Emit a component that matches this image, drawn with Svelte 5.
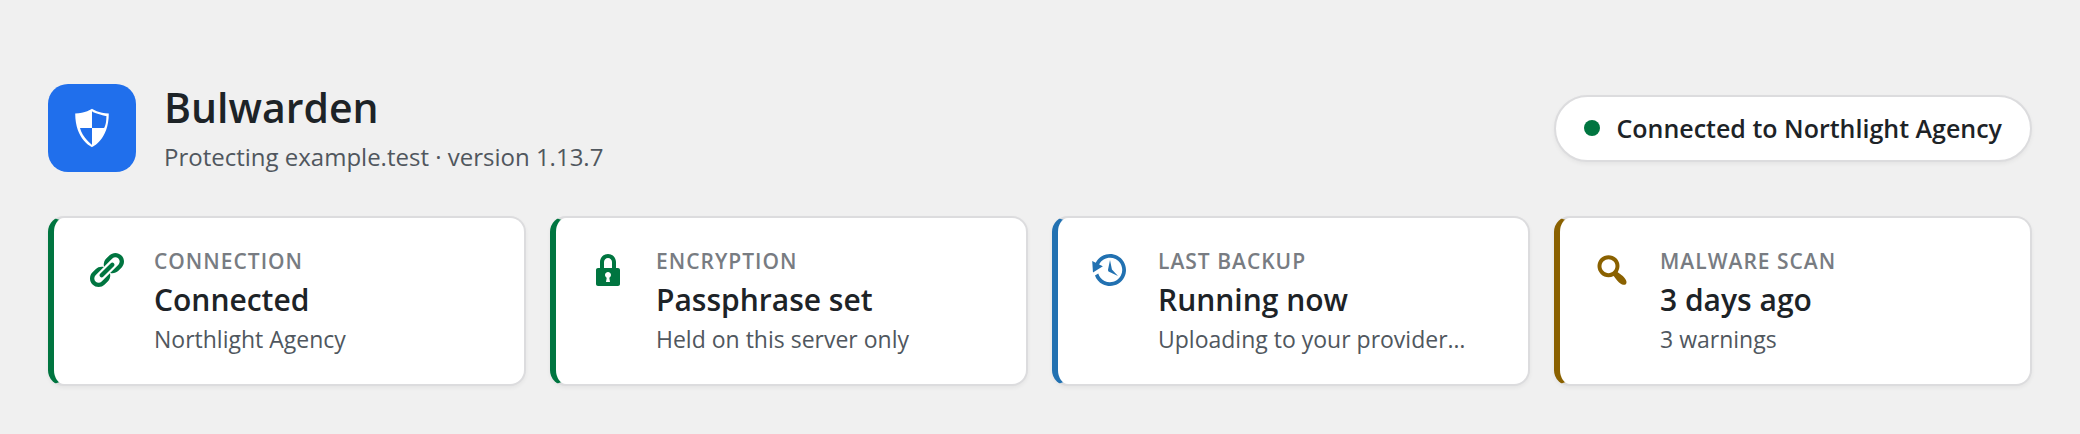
<script>
  const icons = {
    shield:
      'M10 2s3 2 7 2c0 11-7 14-7 14S3 15 3 4c4 0 7-2 7-2zm0 8h5s1-1 1-5c0 0-5-1-6-2v7H5c1 4 5 7 5 7v-7z',
    link: 'M17.74 2.76c1.68 1.69 1.68 4.41 0 6.1l-1.53 1.52c-1.12 1.12-2.7 1.47-4.14 1.09l2.62-2.61.76-.77.76-.76c.84-.84.84-2.2 0-3.04-.84-.85-2.2-.85-3.04 0l-.77.76-3.38 3.38c-.37-1.44-.02-3.02 1.1-4.14l1.52-1.53c1.69-1.68 4.42-1.68 6.1 0zM8.59 13.43l5.34-5.34c.42-.42.42-1.1 0-1.52-.44-.43-1.13-.39-1.53 0l-5.33 5.34c-.42.42-.42 1.1 0 1.52.44.43 1.13.39 1.52 0zm-.76 2.29l4.14-4.15c.38 1.44.03 3.02-1.09 4.14l-1.52 1.53c-1.69 1.68-4.41 1.68-6.1 0-1.68-1.68-1.68-4.42 0-6.1l1.53-1.52c1.12-1.12 2.7-1.47 4.14-1.1l-4.14 4.15c-.85.84-.85 2.2 0 3.05.84.84 2.2.84 3.04 0z',
    lock: 'M14 9h1c.55 0 1 .45 1 1v7c0 .55-.45 1-1 1H5c-.55 0-1-.45-1-1v-7c0-.55.45-1 1-1h1V6c0-2.21 1.79-4 4-4s4 1.79 4 4v3zM8 9h4V6c0-1.1-.9-2-2-2s-2 .9-2 2v3zm3 7l-.36-2.15c.51-.24.86-.75.86-1.35 0-.83-.67-1.5-1.5-1.5s-1.5.67-1.5 1.5c0 .6.35 1.11.86 1.35L9 16h2z',
    backup:
      'M13.65 2.88c3.93 2.01 5.48 6.84 3.47 10.77s-6.83 5.48-10.77 3.47c-1.87-.96-3.2-2.56-3.86-4.4l1.64-1.03c.45 1.57 1.52 2.95 3.08 3.76 3.01 1.54 6.69.35 8.23-2.66 1.55-3.01.36-6.69-2.65-8.24C9.78 3.01 6.1 4.2 4.56 7.21l1.88.97-4.95 3.08-.39-5.82 1.78.91C4.9 2.4 9.75.89 13.65 2.88zm-4.36 7.83C9.11 10.53 9 10.28 9 10c0-.07.03-.12.04-.19h-.01L10 5l.97 4.81L14 13l-4.5-2.12.02-.02c-.08-.04-.16-.09-.23-.15z',
    search:
      'M12.14 4.18c1.87 1.87 2.11 4.75.72 6.89.12.1.22.21.36.31.2.16.47.36.81.59.34.24.56.39.66.47.42.31.73.57.94.78.32.32.6.65.84 1 .25.35.44.69.59 1.04.14.35.21.68.18 1-.02.32-.14.59-.36.81s-.49.34-.81.36c-.31.02-.65-.04-.99-.19-.35-.14-.7-.34-1.04-.59-.35-.24-.68-.52-1-.84-.21-.21-.47-.52-.77-.93-.1-.13-.25-.35-.47-.66-.22-.32-.4-.57-.56-.78-.16-.2-.29-.35-.44-.5-2.07 1.09-4.69.76-6.44-.98-2.14-2.15-2.14-5.64 0-7.78 2.15-2.15 5.63-2.15 7.78 0zm-1.41 6.36c1.36-1.37 1.36-3.58 0-4.95-1.37-1.37-3.59-1.37-4.95 0-1.37 1.37-1.37 3.58 0 4.95 1.36 1.37 3.58 1.37 4.95 0z'
  };

  const cards = [
    { icon: 'link', tone: 'good', label: 'Connection', value: 'Connected', detail: 'Northlight Agency' },
    { icon: 'lock', tone: 'good', label: 'Encryption', value: 'Passphrase set', detail: 'Held on this server only' },
    { icon: 'backup', tone: 'info', label: 'Last backup', value: 'Running now', detail: 'Uploading to your provider…' },
    { icon: 'search', tone: 'warn', label: 'Malware scan', value: '3 days ago', detail: '3 warnings' }
  ];
</script>

<main>
  <header>
    <div class="logo">
      <svg viewBox="0 0 20 20" aria-hidden="true"><path d={icons.shield} /></svg>
    </div>
    <div class="heading">
      <h1>Bulwarden</h1>
      <p>Protecting example.test · version 1.13.7</p>
    </div>
    <div class="pill"><span class="dot"></span>Connected to Northlight Agency</div>
  </header>

  <section class="cards">
    {#each cards as card}
      <article class="card {card.tone}">
        <svg viewBox="0 0 20 20" aria-hidden="true"><path d={icons[card.icon]} /></svg>
        <div class="text">
          <div class="label">{card.label}</div>
          <div class="value">{card.value}</div>
          <div class="detail">{card.detail}</div>
        </div>
      </article>
    {/each}
  </section>
</main>

<style>
  :global(body) {
    background: #f0f0f0;
  }

  main {
    padding: 78px 48px 48px;
    font-family: 'Segoe UI', 'Open Sans', 'Noto Sans', sans-serif;
    color: #1d2327;
  }

  header {
    display: flex;
    align-items: center;
    gap: 28px;
    margin-bottom: 38px;
  }

  .logo {
    display: grid;
    place-items: center;
    flex: none;
    width: 88px;
    height: 88px;
    border-radius: 20px;
    background: #206fec;
  }

  .logo svg {
    width: 48px;
    height: 48px;
    fill: #fff;
  }

  .heading {
    flex: 1;
    min-width: 0;
  }

  h1 {
    margin: 0;
    font-size: 41px;
    font-weight: 600;
    line-height: 58px;
  }

  p {
    margin: 0;
    font-size: 24px;
    line-height: 42px;
    color: #50575e;
  }

  .pill {
    display: flex;
    align-items: center;
    gap: 16px;
    padding: 14px 28px;
    border: 2px solid #dcdcde;
    border-radius: 999px;
    background: #fff;
    box-shadow: 0 2px 4px rgba(0, 0, 0, 0.05);
    font-size: 25px;
    font-weight: 600;
    line-height: 35px;
    white-space: nowrap;
  }

  .dot {
    width: 16px;
    height: 16px;
    border-radius: 50%;
    background: #007540;
  }

  .cards {
    display: grid;
    grid-template-columns: repeat(4, minmax(0, 1fr));
    gap: 24px;
  }

  .card {
    display: flex;
    align-items: flex-start;
    gap: 28px;
    padding: 28px 32px;
    border: 2px solid #dcdcde;
    border-left: 6px solid var(--tone);
    border-radius: 16px;
    background: #fff;
    box-shadow: 0 2px 4px rgba(0, 0, 0, 0.05);
  }

  .card svg {
    flex: none;
    width: 40px;
    height: 40px;
    margin-top: 4px;
    fill: var(--tone);
  }

  .good {
    --tone: #007540;
  }

  .info {
    --tone: #2271b1;
  }

  .warn {
    --tone: #8a6100;
  }

  .text {
    min-width: 0;
  }

  .label {
    font-size: 21px;
    font-weight: 600;
    line-height: 31px;
    letter-spacing: 1px;
    text-transform: uppercase;
    color: #787c82;
  }

  .value {
    font-size: 30px;
    font-weight: 600;
    line-height: 46px;
  }

  .detail {
    font-size: 23px;
    line-height: 33px;
    color: #50575e;
  }
</style>
